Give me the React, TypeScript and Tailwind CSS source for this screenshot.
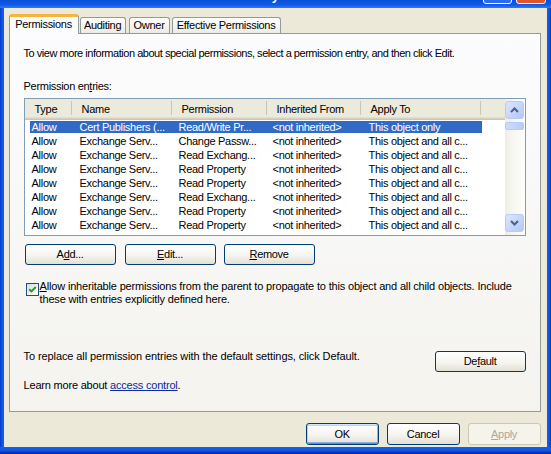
import React from "react";

const rows: string[][] = [
  ["Allow", "Cert Publishers (...", "Read/Write Pr...", "<not inherited>", "This object only"],
  ["Allow", "Exchange Serv...", "Change Passw...", "<not inherited>", "This object and all c..."],
  ["Allow", "Exchange Serv...", "Read Exchang...", "<not inherited>", "This object and all c..."],
  ["Allow", "Exchange Serv...", "Read Property", "<not inherited>", "This object and all c..."],
  ["Allow", "Exchange Serv...", "Read Property", "<not inherited>", "This object and all c..."],
  ["Allow", "Exchange Serv...", "Read Exchang...", "<not inherited>", "This object and all c..."],
  ["Allow", "Exchange Serv...", "Read Property", "<not inherited>", "This object and all c..."],
  ["Allow", "Exchange Serv...", "Read Property", "<not inherited>", "This object and all c..."],
];

function XpButton({
  children,
  className = "",
  variant = "normal",
}: {
  children: React.ReactNode;
  className?: string;
  variant?: "normal" | "default" | "disabled";
}) {
  const base =
    "flex items-center justify-center rounded-[3px] border text-[11px] leading-[13px] select-none";
  const styles =
    variant === "disabled"
      ? "border-[#C9C7BA] bg-[#F5F4EA] text-[#ACA899]"
      : variant === "default"
      ? "border-[#003C74] text-black bg-[linear-gradient(180deg,#FFFFFF_0%,#F5F4EF_55%,#E3E0D4_100%)] shadow-[inset_0_1px_0_#CEE7FF,inset_1px_0_0_#B9D1FA,inset_-1px_0_0_#8CB4F2,inset_0_-1px_0_#6982EE,inset_0_2px_0_#BCD4F6,inset_0_-2px_0_#89ADE4]"
      : "border-[#003C74] text-black bg-[linear-gradient(180deg,#FFFFFF_0%,#F5F4EF_55%,#E3E0D4_100%)]";
  return <div className={`${base} ${styles} ${className}`}>{children}</div>;
}

function ScrollBtn({ dir }: { dir: "up" | "down" }) {
  return (
    <div className="flex h-[18px] w-[19px] items-center justify-center rounded-[3px] border border-[#B9CBF3] bg-[linear-gradient(135deg,#DCE6FD_0%,#C3D3FB_60%,#B4C8F6_100%)]">
      <svg width="9" height="6" viewBox="0 0 9 6">
        {dir === "up" ? (
          <path d="M1 5 L4.5 1.5 L8 5" fill="none" stroke="#4D6185" strokeWidth="2" />
        ) : (
          <path d="M1 1 L4.5 4.5 L8 1" fill="none" stroke="#4D6185" strokeWidth="2" />
        )}
      </svg>
    </div>
  );
}

export default function App() {
  const headers: { label: string; w: string }[] = [
    { label: "Type", w: "w-[47px]" },
    { label: "Name", w: "w-[100px]" },
    { label: "Permission", w: "w-[95px]" },
    { label: "Inherited From", w: "w-[94px]" },
    { label: "Apply To", w: "w-[120px]" },
  ];
  const colW = ["w-[42px] pl-[2px]", "w-[100px] pl-[8px]", "w-[95px] pl-[7px]", "w-[94px] pl-[6px]", "w-[121px] pl-[8px]"];

  return (
    <div className="flex h-[454px] w-[551px] flex-col overflow-hidden font-['Liberation_Sans',Arial,sans-serif] text-[11px] tracking-[-0.3px] text-black">
      {/* title bar (bottom part visible) */}
      <div className="flex h-[8px] items-end overflow-hidden bg-[linear-gradient(180deg,#0A4FDA_0%,#0D5AE8_60%,#2E7BF5_100%)]">
        <span className="mb-[4px] ml-[162px] whitespace-nowrap text-[13px] font-bold leading-[16px] tracking-normal text-white">
          Advanced Security
        </span>
        <div className="ml-auto mb-[4px] flex gap-[4px] pr-[5px]">
          <div className="h-[21px] w-[29px] rounded-[3px] border border-white bg-[#2D6BF2]" />
          <div className="h-[21px] w-[30px] rounded-[3px] border border-white bg-[#E0542E]" />
        </div>
      </div>

      <div className="flex flex-1">
        <div className="w-[4px] bg-[linear-gradient(90deg,#0838C8_0%,#0F55E6_50%,#1660EE_100%)]" />
        <div className="flex flex-1 flex-col bg-[#ECE9D8] pl-[5px] pr-[6px]">
          {/* tabs */}
          <div className="mt-[6px] flex h-[19px] items-end">
            <div className="relative z-10 -mb-[1px] flex h-[20px] w-[70px] items-center justify-center rounded-t-[3px] border border-b-0 border-[#919B9C] border-t-[3px] border-t-[#F4B43E] bg-[#FCFCFE] pb-[2px]">
              Permissions
            </div>
            <div className="ml-[1px] flex h-[16px] w-[46px] items-center justify-center rounded-t-[3px] border border-b-0 border-[#919B9C] bg-[linear-gradient(180deg,#FFFFFF_0%,#F3F3EF_60%,#ECEBE5_100%)]">
              Auditing
            </div>
            <div className="ml-[3px] flex h-[16px] w-[41px] items-center justify-center rounded-t-[3px] border border-b-0 border-[#919B9C] bg-[linear-gradient(180deg,#FFFFFF_0%,#F3F3EF_60%,#ECEBE5_100%)]">
              Owner
            </div>
            <div className="ml-[2px] flex h-[16px] w-[109px] items-center justify-center rounded-t-[3px] border border-b-0 border-[#919B9C] bg-[linear-gradient(180deg,#FFFFFF_0%,#F3F3EF_60%,#ECEBE5_100%)]">
              Effective Permissions
            </div>
          </div>

          {/* tab panel */}
          <div className="flex h-[379px] flex-col border border-[#919B9C] bg-[linear-gradient(180deg,#FCFCFE_0%,#F4F3EE_100%)] pl-[14px] pr-[14px]">
            <div className="mt-[13px] h-[13px] whitespace-nowrap leading-[13px] tracking-[-0.47px]">
              To view more information about special permissions, select a permission entry, and then click Edit.
            </div>
            <div className="mt-[20px] h-[13px] leading-[13px]">
              Permission en<span className="underline">t</span>ries:
            </div>

            {/* list view */}
            <div className="mt-[5px] flex h-[138px] w-[502px] border border-[#7F9DB9] bg-white">
              <div className="flex flex-1 flex-col overflow-hidden">
                <div className="flex h-[21px] shrink-0 items-center bg-[linear-gradient(180deg,#EBEADB_0px,#EBEADB_18px,#E2DECD_18px,#E2DECD_19px,#D6D2C2_19px,#D6D2C2_20px,#CBC7B8_20px)]">
                  {headers.map((h) => (
                    <div key={h.label} className={`flex h-full items-center ${h.w}`}>
                      <span className="flex-1 overflow-hidden whitespace-nowrap pb-[1px] pl-[10px]">{h.label}</span>
                      <div className="mb-[3px] h-[14px] w-px bg-[#C7C5B2]" />
                    </div>
                  ))}
                  <div className="flex-1" />
                </div>
                <div className="flex flex-col pl-[5px]">
                  {rows.map((r, i) => (
                    <div key={i} className="flex h-[14px] items-start pt-[1px]">
                      <div
                        className={`flex h-[12px] w-[452px] items-center leading-[12px] ${
                          i === 0 ? "bg-[#316AC5] text-white" : ""
                        }`}
                      >
                        {r.map((c, j) => (
                          <div key={j} className={`overflow-hidden whitespace-nowrap ${colW[j]}`}>
                            {c}
                          </div>
                        ))}
                      </div>
                    </div>
                  ))}
                </div>
              </div>
              {/* scrollbar */}
              <div className="flex w-[20px] shrink-0 flex-col bg-[linear-gradient(90deg,#EEEDE5_0%,#F7F6F1_40%,#FDFDFA_100%)] pb-[3px] pr-[1px] pt-[2px]">
                <ScrollBtn dir="up" />
                <div className="mt-[3px] h-[8px] w-[19px] rounded-[2px] border border-[#B9CBF3] bg-[linear-gradient(90deg,#CCDAFC_0%,#C2D3FB_60%,#B8CBF7_100%)]" />
                <div className="mt-auto">
                  <ScrollBtn dir="down" />
                </div>
              </div>
            </div>

            {/* buttons */}
            <div className="mt-[8px] flex">
              <XpButton className="ml-[1px] h-[21px] w-[91px]">
                A<span className="underline">d</span>d...
              </XpButton>
              <XpButton className="ml-[9px] h-[21px] w-[91px]">
                <span className="underline">E</span>dit...
              </XpButton>
              <XpButton className="ml-[8px] h-[21px] w-[91px]">
                <span className="underline">R</span>emove
              </XpButton>
            </div>

            {/* checkbox */}
            <div className="mt-[15px] flex items-start">
              <div className="ml-[2px] mt-[3px] flex h-[13px] w-[13px] shrink-0 items-center justify-center border border-[#1C5180] bg-[linear-gradient(135deg,#DCDCD7_0%,#F4F4F1_60%,#FFFFFF_100%)]">
                <svg width="9" height="9" viewBox="0 0 9 9">
                  <path d="M1.2 4.2 L3.4 6.4 L7.8 2" fill="none" stroke="#21A121" strokeWidth="2" />
                </svg>
              </div>
              <div className="ml-[1px] whitespace-nowrap leading-[13px] tracking-[-0.17px]">
                <span className="underline">A</span>llow inheritable permissions from the parent to propagate to this object and all child objects. Include
                <br />
                these with entries explicitly defined here.
              </div>
            </div>

            {/* default row */}
            <div className="mt-[44px] flex items-start justify-between">
              <div className="h-[13px] whitespace-nowrap leading-[13px] tracking-[-0.1px]">
                To replace all permission entries with the default settings, click Default.
              </div>
              <XpButton className="mt-[1px] h-[21px] w-[91px]">
                De<span className="underline">f</span>ault
              </XpButton>
            </div>

            <div className="mt-[7px] h-[13px] leading-[13px] tracking-[-0.2px]">
              Learn more about <span className="text-[#0B2B9F] underline">access control</span>.
            </div>
          </div>

          {/* bottom buttons */}
          <div className="mt-[11px] flex justify-end gap-[8px]">
            <XpButton variant="default" className="h-[22px] w-[73px]">
              OK
            </XpButton>
            <XpButton className="h-[22px] w-[73px]">Cancel</XpButton>
            <XpButton variant="disabled" className="h-[22px] w-[73px]">
              <span className="underline">A</span>pply
            </XpButton>
          </div>
        </div>
        <div className="w-[5px] bg-[linear-gradient(90deg,#1660EE_0%,#0F55E6_50%,#0838C8_100%)]" />
      </div>
      <div className="h-[7px] bg-[linear-gradient(180deg,#1660EE_0%,#0F55E6_50%,#0838C8_75%,#00208F_100%)]" />
    </div>
  );
}
